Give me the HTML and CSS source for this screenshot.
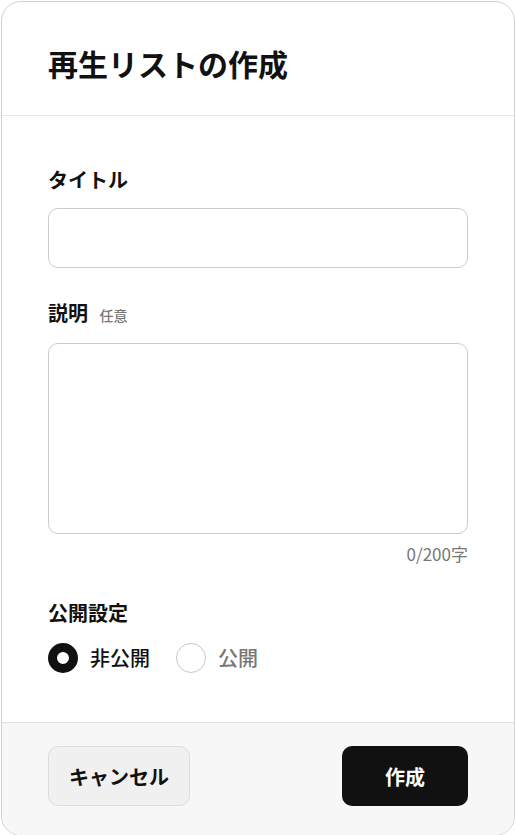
FILE: index.html
```html
<!DOCTYPE html>
<html lang="ja">
<head>
    <meta charset="UTF-8">
    <title>再生リストの作成</title>
    <link rel="stylesheet" href="styles.css">
</head>
<body>

<div class="dialog">
    <div class="dialog-header">
        <h2>再生リストの作成</h2>
    </div>

    <form id="playlistForm" class="dialog-body">
        <div class="field">
            <label for="title">タイトル</label>
            <input type="text" id="title" name="title">
        </div>

        <div class="field">
            <label for="description">説明 <span class="optional">任意</span></label>
            <textarea id="description" name="description" maxlength="200"></textarea>
            <div class="counter"><span id="count">0</span>/200字</div>
        </div>

        <div class="field visibility">
            <div class="field-label">公開設定</div>
            <div class="radio-group">
                <label class="radio">
                    <input type="radio" name="visibility" value="private" checked>
                    <span class="dot"></span>
                    <span class="radio-text">非公開</span>
                </label>
                <label class="radio">
                    <input type="radio" name="visibility" value="public">
                    <span class="dot"></span>
                    <span class="radio-text">公開</span>
                </label>
            </div>
        </div>
    </form>

    <div class="dialog-footer">
        <button type="button" class="btn btn-cancel">キャンセル</button>
        <button type="submit" form="playlistForm" class="btn btn-primary">作成</button>
    </div>
</div>

<script>
var desc = document.getElementById("description");
desc.addEventListener("input", function() {
    document.getElementById("count").textContent = desc.value.length;
});
</script>

</body>
</html>
```

FILE: styles.css
```css
html, body {
    height: 100%;
}
body {
    font-family: "Noto Sans CJK JP", "Noto Sans", sans-serif;
    background-color: #ffffff;
    margin: 0;
    padding: 1px;
    box-sizing: border-box;
    color: #111;
}
.dialog {
    height: 100%;
    border: 1px solid #d2d2d2;
    border-radius: 20px;
    overflow: hidden;
    display: flex;
    flex-direction: column;
    background-color: #fff;
}
.dialog-header {
    padding: 40px 46px 31px;
    border-bottom: 1px solid #e6e6e6;
}
.dialog-header h2 {
    margin: 0;
    font-size: 30px;
    line-height: 42px;
    font-weight: 700;
}
.dialog-body {
    flex: 1;
    padding: 50px 46px 0;
    display: flex;
    flex-direction: column;
}
.field {
    display: flex;
    flex-direction: column;
    margin-bottom: 31px;
}
.field label, .field-label {
    font-size: 20px;
    line-height: 28px;
    font-weight: 700;
    margin-bottom: 14px;
}
.optional {
    font-size: 14px;
    font-weight: 500;
    color: #777;
    margin-left: 7px;
}
input[type=text], textarea {
    font-family: inherit;
    font-size: 18px;
    border: 1px solid #cbcbcb;
    border-radius: 10px;
    box-sizing: border-box;
    width: 100%;
    padding: 14px 16px;
    outline: none;
}
input[type=text] {
    height: 60px;
}
textarea {
    height: 191px;
    resize: none;
}
.counter {
    text-align: right;
    font-size: 17px;
    line-height: 22px;
    color: #777;
    margin-top: 9px;
    margin-bottom: 3px;
}
.visibility .field-label {
    margin-bottom: 16px;
}
.radio-group {
    display: flex;
    align-items: center;
    gap: 26px;
}
.field .radio {
    display: flex;
    align-items: center;
    gap: 12px;
    margin: 0;
    font-size: 20px;
    font-weight: 500;
    cursor: pointer;
}
.radio input {
    display: none;
}
.dot {
    width: 30px;
    height: 30px;
    box-sizing: border-box;
    border: 1.5px solid #c8c8c8;
    border-radius: 50%;
}
.radio input:checked + .dot {
    border: 9px solid #111;
}
.radio-text {
    color: #777;
    line-height: 30px;
}
.radio input:checked ~ .radio-text {
    color: #111;
}
.dialog-footer {
    background-color: #f7f7f7;
    border-top: 1px solid #e2e2e2;
    padding: 23px 46px 29px;
    display: flex;
    justify-content: space-between;
}
.btn {
    font-family: inherit;
    font-size: 20px;
    font-weight: 700;
    height: 60px;
    border-radius: 10px;
    cursor: pointer;
}
.btn-cancel {
    width: 142px;
    background-color: #f0f0f0;
    border: 1px solid #dcdcdc;
    color: #111;
}
.btn-primary {
    width: 126px;
    background-color: #111;
    border: none;
    color: #fff;
}
```
